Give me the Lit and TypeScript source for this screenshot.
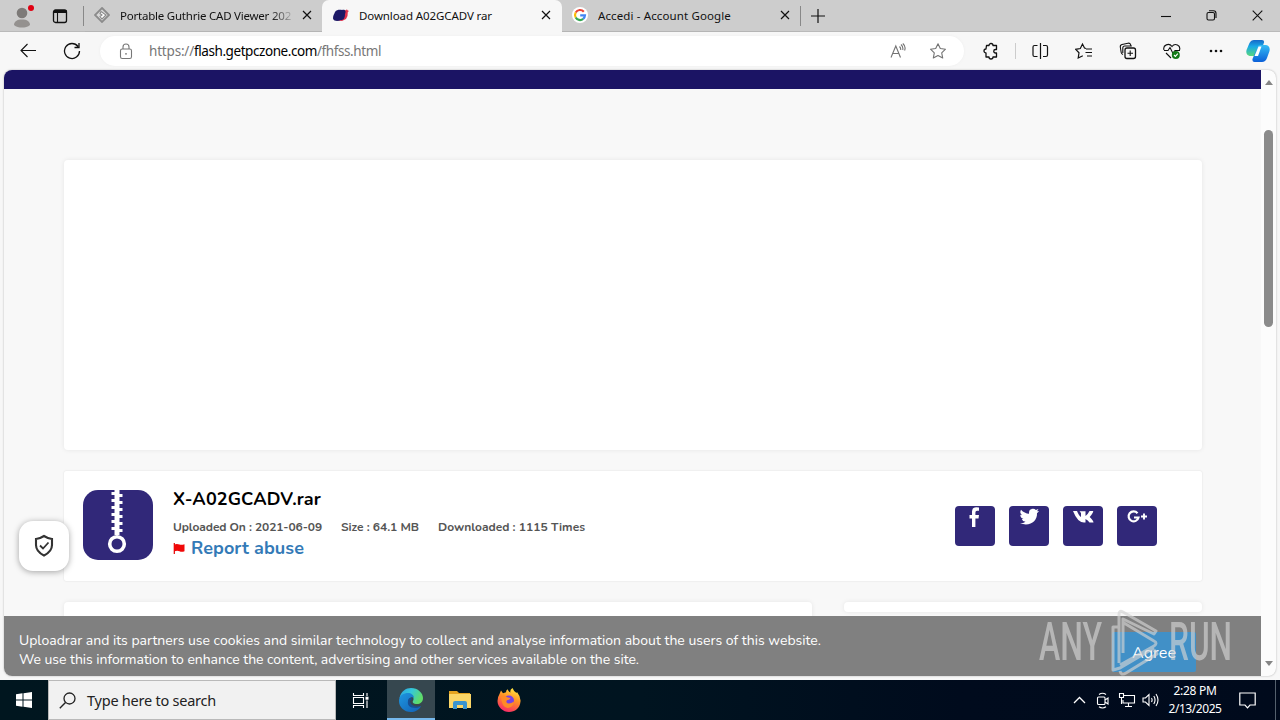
import { LitElement, html, css, svg } from "lit";
import type { TemplateResult } from "lit";
import { customElement, property } from "lit/decorators.js";

/**
 * A single line of text, tracked so that it takes exactly `width` pixels
 * @summary Fixed width text
 */
@customElement("text-run")
export class TextRun extends LitElement {
  @property({ type: Number }) width = 0;
  @property() text = "";

  static styles = css`
    :host {
      display: inline-block;
      white-space: pre;
      flex: none;
    }
  `;

  firstUpdated() {
    const span = this.renderRoot.querySelector("span")!;
    const natural = span.getBoundingClientRect().width;
    span.style.letterSpacing = `${(this.width - natural) / this.text.length}px`;
  }

  render() {
    return html`<span>${this.text}</span>`;
  }
}

const icon = (w: number, h: number, body: TemplateResult | TemplateResult[]) => html`
  <svg width=${w} height=${h} viewBox="0 0 ${w} ${h}" fill="none" stroke="currentColor" stroke-width="1.1">${body}</svg>
`;

const icons = {
  profile: icon(26, 28, svg`
    <circle cx="9" cy="11" r="5.300" fill="#7d7a78" stroke="none"/>
    <path d="M1 23c0-3.500 3-5.500 8-5.500s8 2 8 5.500c-2 2-5 2.500-8 2.500s-6-.5-8-2.500z" fill="#94918f" stroke="none"/>
    <circle cx="18" cy="6" r="3" fill="#e00012" stroke="none"/>`),
  workspace: icon(16, 16, svg`
    <rect x="1.500" y="2" width="13" height="12.500" rx="2" stroke="#111" stroke-width="1.300"/>
    <path d="M2 3.500h12.500" stroke="#111" stroke-width="3"/><path d="M5.500 4v10" stroke="#111"/>`),
  cad: icon(16, 16, svg`
    <path d="M8 1 15 8 8 15 1 8z" fill="#d8d8d8" stroke="#8b8b8b" stroke-width="1.800"/>
    <path d="m7 4.500 5 3.500-4 4-2-2.500 2-1.500-2-1.500z" fill="#fff" stroke="#8b8b8b"/>`),
  rar: icon(17, 16, svg`
    <path d="M10 4l4.500-1 .3-1 .7 1.300L17 4l-1.200 1-.3 4-1.500 3-4 2-4-.5z" fill="#e0304c" stroke="none"/>
    <path d="M3 5C5 2 9 3 10 3c4-1 4 2 3 4 0 5-2 6-4 6-3 1.500-7 1.500-8-1.500 0-3 1-4 2-6.500z" fill="#1c1866" stroke="none"/>`),
  google: icon(16, 16, svg`
    <circle cx="8" cy="8" r="8" fill="#fff" stroke="none"/>
    <g stroke-width="2.200"><path d="M11.800 4.700A5 5 0 0 0 3.700 5.500" stroke="#ea4335"/>
    <path d="M3.700 5.500a5 5 0 0 0 0 5" stroke="#fbbc05"/>
    <path d="M3.700 10.500a5 5 0 0 0 7.500 1.400" stroke="#34a853"/>
    <path d="M11.200 11.900A5 5 0 0 0 13 8.300H8.200" stroke="#4285f4"/></g>`),
  close: icon(10, 10, svg`<path d="m1 1 8 8M9 1 1 9" stroke-width="1.200"/>`),
  plus: icon(14, 14, svg`<path d="M7 0v14M0 7h14" stroke-width="1.200"/>`),
  minimize: icon(10, 10, svg`<path d="M0 5.500h10"/>`),
  restore: icon(11, 11, svg`<rect x="1" y="2.500" width="7.500" height="7.500" rx="1.500"/><path d="M3 .8h4.500Q10 .8 10 3.500V8"/>`),
  winClose: icon(11, 11, svg`<path d="m.7.7 9.600 9.600m0-9.600L.7 10.300"/>`),
  back: icon(18, 18, svg`<path d="M17 8.500H2m6.500-6.500L2 8.500 8.500 15"/>`),
  reload: icon(18, 18, svg`<path d="M15 4.500A7.500 7.500 0 1 0 16.500 9M16 1v4.500h-4.500" stroke-width="1.300"/>`),
  lock: icon(14, 17, svg`
    <rect x="1.500" y="6" width="11" height="9.500" rx="1.800"/><path d="M4 6V4a3 3 0 0 1 6 0v2"/>
    <circle cx="7" cy="10.800" r=".9" fill="currentColor" stroke="none"/>`),
  readAloud: icon(16, 16, svg`
    <path d="M1 14.500 5.800 3l4.700 11.500M2.700 10.500h6.200M9.500 3.500q1.500 1.500 1.200 3.500M11 1.500q2.500 2.500 1.700 5.500M12.800.5q3.400 3 1.800 7"/>`),
  star: icon(18, 18, svg`
    <path d="m9 1.700 2.300 4.800 5.200.7-3.800 3.600 1 5.200L9 13.500l-4.700 2.500 1-5.200L1.500 7.200l5.200-.7z" stroke-linejoin="round"/>`),
  puzzle: icon(18, 18, svg`
    <path d="M4.500 3.500H7a2 2 0 0 1 4 0h3.500v4h-1a1.700 1.700 0 0 0 0 3.500h1v4H11a2 2 0 0 1-4 0H4v-4a2 2 0 0 1 0-4z" stroke-width="1.300" stroke-linejoin="round"/>`),
  split: icon(18, 18, svg`
    <path d="M9.500 1v16M6.500 3.500H3.500q-1.500 0-1.500 1.500v8q0 1.500 1.500 1.500h3M12 3.500h3q1.500 0 1.500 1.500v8q0 1.500-1.500 1.500h-3" stroke-width="1.200"/>`),
  favorites: icon(18, 18, svg`
    <path d="M11 6.500 9.500 6 7.500 2 5.300 6.500l-4.600.8L4 10.800 3.200 16l4.600-2.200M11 7h6M10.500 10.500H17M12 14h5" stroke-width="1.200"/>`),
  collections: icon(18, 18, svg`
    <rect x="6" y="6" width="10.500" height="10.500" rx="2" stroke-width="1.300"/><path d="M11.200 8.500v5.500M8.500 11.200H14"/>
    <path d="M4 12.500q-1.500-.5-1.800-2L1.300 5Q1 3 3 2.500l6-1.300q2-.4 2.600 1.500l.4 1.500M3.800 11V6q0-2 2-2h7"/>`),
  health: icon(18, 18, svg`
    <path d="M1 8C-.5 3 6 .5 9 4.500 12 .5 18 3.500 16.500 8M3 11l5 5M1 8.500h4l2-3 3 6 2-3h5"/>
    <circle cx="12.800" cy="13" r="4" fill="#137a18" stroke="none"/><path d="m11 13 1.400 1.400 2.400-2.700" stroke="#fff"/>`),
  more: icon(16, 4, svg`<g fill="currentColor" stroke="none"><circle cx="3" cy="2" r="1.300"/><circle cx="8" cy="2" r="1.300"/><circle cx="13" cy="2" r="1.300"/></g>`),
  copilot: icon(24, 24, svg`
    <defs>
      <linearGradient id="ca" x1="0" y1="0" x2="0" y2="1"><stop offset="0" stop-color="#1668c8"/><stop offset=".4" stop-color="#19a8e6"/><stop offset="1" stop-color="#58d87e"/></linearGradient>
      <linearGradient id="cb" x1="0" y1="0" x2="0" y2="1"><stop offset="0" stop-color="#34bdf5"/><stop offset="1" stop-color="#0b5fd8"/></linearGradient>
    </defs>
    <g stroke="none"><path d="M8 1h8q2.500 0 2 2.500L14 15q-1 2-3 2H3.500q-4-1-3-6L3.500 4Q5 1 8 1z" fill="url(#ca)"/>
    <path d="M14 6h6q4.500 1 3.500 6l-2.500 7q-1.500 4-5 4H8.500Q6 23 6.500 20L11 9q1-3 3-3z" fill="url(#cb)"/>
    <path d="M12.500 7.500h3L12 17H8.500z" fill="#fff"/></g>`),
  shield: icon(22, 24, svg`
    <path d="M11 2q4 2.500 8 3v6q0 6.500-8 10.500Q3 17.500 3 11V5q4-.5 8-3z" stroke-width="2.100"/>
    <path d="m7 11.500 3 3 5.500-6" stroke-width="1.800"/>`),
  zip: icon(70, 70, svg`
    <rect width="70" height="70" rx="15" fill="#312879" stroke="none"/>
    <path d="M34 0v45" stroke="#fff" stroke-width="5"/>
    <path d="M30.500 2v42M37.500 4v42" stroke="#fff" stroke-width="4" stroke-dasharray="3 4"/>
    <circle cx="34" cy="54" r="7.300" fill="#312879" stroke="#fff" stroke-width="3.600"/>`),
  flag: icon(12, 11, svg`<path d="M1.300 0v11" stroke="#e00000" stroke-width="1.200"/><path d="M1 1.500q3-1 5.500 0 2 .6 5-.3v7q-3 1-5 0-2.500-1-5.500.3z" fill="#f00808" stroke="none"/>`),
  facebook: icon(20, 22, svg`<path d="M14 1.500v3.200h-2q-1.600 0-1.600 1.800V9H14l-.5 3.500h-3.100V21H7v-8.500H4.500V9H7V5.500q0-4 4.300-4.200z" fill="#fff" stroke="none"/>`),
  twitter: icon(20, 22, svg`<path d="M20 5q-1 1.500-2 2.200C18.500 15 11 21 1 17.300q3.500 0 5.500-1.500Q3.500 15.500 2.800 13h1.700Q1.300 12 1.300 8.800l1.800.5Q.2 7 2 3.800 5.500 7.500 10 7.800 9.500 3 14 2.800q1.700 0 2.900 1.200l2.500-.9q-.4 1.400-1.600 2.200z" fill="#fff" stroke="none"/>`),
  vk: icon(22, 22, svg`<path d="M1 5h4q2 5 4 6V7L7.500 5.200h6V10q2-1 4-5h3.700q.3 1.500-3.500 6 3.800 3.500 3.800 5.500h-4q-1.500-2.500-4-3.500v3.500H12Q5.500 16.500 1 5z" fill="#fff" stroke="none"/>`),
  gplus: icon(22, 22, svg`<path d="M11.500 7.200a5 5 0 1 0 1 4.300H8" stroke="#fff" stroke-width="2.200"/><path d="M18 7.500v6M15 10.500h6" stroke="#fff" stroke-width="1.900"/>`),
  start: icon(16, 16, svg`<path d="m0 2.200 6.500-.9v6.200H0zM7.500 1.200 16 0v7.500H7.500zM0 8.500h6.500v6.200L0 13.800zM7.500 8.500H16V16l-8.500-1.200z" fill="#fff" stroke="none"/>`),
  search: icon(17, 17, svg`<circle cx="10.500" cy="6.500" r="5.500" stroke-width="1.300"/><path d="M6.500 10.500.8 16.200" stroke-width="1.400"/>`),
  taskView: icon(17, 17, svg`<path d="M1.500 1v2.500h10V1M1.500 16v-2.500h10V16M1.500 5.500h10v6h-10zM15 1v3M15 8.500V16"/><path d="M13.500 4.700h3v3h-3z" fill="#fff" stroke="none"/>`),
  edge: icon(24, 24, svg`
    <defs>
      <linearGradient id="ea" x1="0" y1="0" x2="1" y2=".4"><stop offset="0" stop-color="#2b9fdf"/><stop offset=".5" stop-color="#34c7dc"/><stop offset="1" stop-color="#5fdc69"/></linearGradient>
      <linearGradient id="eb" x1="0" y1="0" x2="1" y2="1"><stop offset="0" stop-color="#1e96e0"/><stop offset="1" stop-color="#1260b5"/></linearGradient>
    </defs>
    <g stroke="none"><path d="M.5 10C2 3 7 0 12 0c7 0 12 5 12 10 0 4-3 6-6 6-3.500 0-5-1.500-4-3 3-5-6-9-13.500-3z" fill="url(#ea)"/>
    <path d="M0 13c0-6 5-8 9-8 3 0 6 2 6 5-2-2-6 0-5.500 4 .5 4 6.500 7 12.500 4-2 4-6 6-10 6-7 0-12-5-12-11z" fill="url(#eb)"/>
    <path d="M9.500 11q-3 9 7.500 9 3 0 5-2-8 1.500-10.500-3-1.500-3 2-4-2-2-4 0z" fill="#174e94"/></g>`),
  explorer: icon(22, 20, svg`
    <g stroke="none"><path d="M0 1h8l2 2h11v5H0z" fill="#e5a420"/><path d="M0 4h22v14H0z" fill="#fbd667"/>
    <path d="M4 19v-6q0-2 2-2h10q2 0 2 2v6h-4v-4H8v4z" fill="#3994cf"/></g>`),
  firefox: icon(24, 24, svg`
    <defs><linearGradient id="fa" x1=".8" y1="0" x2=".4" y2="1"><stop offset="0" stop-color="#fff044"/><stop offset=".45" stop-color="#ff9325"/><stop offset="1" stop-color="#f92c66"/></linearGradient></defs>
    <g stroke="none"><path d="M2.500 6 4 2.500l2 2.700 3-1q0-2 1.500-3 1 2.500 3 3.300Q12.500 2 15.500 0q1 3 4 5l.5-1q4 5 3.500 9.500C23 20 18 24 12 24S.5 19 .5 13Q.5 9 2.500 6z" fill="url(#fa)"/>
    <circle cx="12" cy="12.500" r="5" fill="#7542e5"/>
    <path d="M4 8.500q4-1.500 5.500.5l4 1q-.5 2-3.500 2.300-1.500 1.700.5 3 3 .7 6.500-1.800-.5 6-6.500 6.500Q4.500 19 4 8.500z" fill="#ff8a27"/></g>`),
  chevron: icon(13, 8, svg`<path d="m1 7 5.500-5.500L12 7" stroke-width="1.300"/>`),
  camera: icon(14, 17, svg`<rect x="1.500" y="5" width="7.500" height="7.500" rx="1"/><path d="m9 8 3-2v6L9 10M3 2.500q3.500-2.500 7 0M3 14.800q3.500 2.500 7 0"/>`),
  network: icon(18, 16, svg`<path d="M6 3.500h10.500v7.500H5V8M10.500 11v3.500M7 14.500h7M1.500 1.500h4v4h-4zM3.500 5.500V12"/>`),
  sound: icon(18, 16, svg`<path d="M1 6h2.500L7 2.500v11L3.500 10H1zM9.500 6q1.200 2 0 4M11.800 4q2.500 4 0 8M14 2q4 6 0 12"/>`),
  notify: icon(17, 17, svg`<path d="M.8 1h15.400v12H11l-2.500 2.800L6 13H.8z" stroke-width="1.200"/>`),
};

const tabs = [
  { name: "first", icon: icons.cad, title: "Portable Guthrie CAD Viewer 202", width: 171 },
  { name: "active", icon: icons.rar, title: "Download A02GCADV rar", width: 133 },
  { name: "last", icon: icons.google, title: "Accedi - Account Google", width: 133 },
];

const shares = [icons.facebook, icons.twitter, icons.vk, icons.gplus];

@customElement("browser-chrome")
export class BrowserChrome extends LitElement {
  static styles = css`
    :host {
      display: block;
      height: 70px;
      color: #111;
      background: #f7f7f7;
      font-family: "Noto Sans", "Open Sans", sans-serif;
    }
    svg { display: block; flex: none; }
    .strip, .tab, .bar, .pill, .tools { display: flex; align-items: center; }
    .strip { height: 32px; background: #cdcdcd; box-sizing: border-box; border-bottom: 1px solid #bababa; }
    .profile { padding-left: 13px; width: 39px; }
    .rule { width: 1px; height: 20px; background: #888; }
    .rule.left { margin-left: 15px; }
    .tab {
      box-sizing: border-box;
      width: 240px;
      height: 32px;
      font-size: 11.500px;
      padding: 0 11px 0 10px;
      gap: 10px;
      border-bottom: 1px solid #b5b5b5;
    }
    .title { flex: 1; min-width: 0; overflow: hidden; }
    .close { display: flex; }
    .first { width: 237px; margin-left: 1px; padding: 0 10px 0 9px; }
    .first .title { mask-image: linear-gradient(90deg, #000 88%, transparent 102%); }
    .active { background: #f7f7f7; border-color: #f7f7f7; border-radius: 7px 7px 0 0; }
    .last { width: 238px; padding-right: 10px; }
    .new { margin-left: 10px; }
    .window { display: flex; align-items: center; gap: 35px; margin-left: auto; padding-right: 17px; }
    .bar { height: 38px; box-sizing: border-box; padding-left: 19px; }
    .bar .reload { margin: 0 19px 0 26px; }
    .pill {
      box-sizing: border-box;
      width: 864px;
      height: 30px;
      border-radius: 15px;
      background: #fff;
      padding: 0 17px 0 19px;
      font-size: 13.500px;
      color: #777;
      box-shadow: 0 0 3px #eee;
    }
    .url { display: flex; flex: 1; margin-left: 16px; }
    .host { color: #000; }
    .pill .actions { display: flex; gap: 23px; align-items: center; color: #737373; }
    .tools { gap: 26.300px; margin-left: 18px; }
    .tools .rule { height: 16px; background: #ccc; margin: 0 -12px 0 -11px; }
    .copilot { margin-left: 22px; }
  `;

  render() {
    return html`
      <div class="strip">
        <div class="profile">${icons.profile}</div>
        ${icons.workspace}
        <div class="rule left"></div>
        ${tabs.map((tab) => html`
          <div class="tab ${tab.name}">
            ${tab.icon}
            <div class="title"><text-run .text=${tab.title} .width=${tab.width}></text-run></div>
            <span class="close">${icons.close}</span>
          </div>
        `)}
        <div class="rule"></div>
        <span class="new">${icons.plus}</span>
        <div class="window">${icons.minimize}${icons.restore}${icons.winClose}</div>
      </div>
      <div class="bar">
        ${icons.back}
        <span class="reload">${icons.reload}</span>
        <div class="pill">
          ${icons.lock}
          <div class="url">
            <text-run text="https://" width="45"></text-run>
            <text-run class="host" text="flash.getpczone.com" width="123"></text-run>
            <text-run text="/fhfss.html" width="64"></text-run>
          </div>
          <div class="actions">${icons.readAloud}${icons.star}</div>
        </div>
        <div class="tools">
          ${icons.puzzle}
          <div class="rule"></div>
          ${icons.split}${icons.favorites}${icons.collections}${icons.health}${icons.more}
        </div>
        <span class="copilot">${icons.copilot}</span>
      </div>
    `;
  }
}

@customElement("download-page")
export class DownloadPage extends LitElement {
  static styles = css`
    :host {
      display: flex;
      position: relative;
      box-sizing: border-box;
      height: 606px;
      margin: 0 4px 4px;
      border-radius: 8px;
      overflow: hidden;
      background: #fcfcfc;
      box-shadow: 0 0 2px #aaa;
      font-family: "Nunito", "Open Sans", sans-serif;
    }
    svg { display: block; }
    .page { width: 1257px; background: #f8f8f8; }
    .top { height: 19px; background: #1b1464; }
    .content { display: grid; gap: 21px; padding: 71px 59px 0 60px; }
    .card {
      background: #fff;
      box-sizing: border-box;
      border-radius: 4px;
      box-shadow: 0 0 5px rgba(0, 0, 0, 0.08);
    }
    .ad { height: 290px; }
    .file { display: flex; height: 110px; padding: 19px 45px 0 19px; border-radius: 2px; box-shadow: 0 0 2px rgba(0, 0, 0, 0.13); }
    .info { flex: 1; margin-left: 20px; }
    .name { display: block; font-size: 18px; font-weight: 700; line-height: 18px; height: 20px; color: #000; }
    .meta { display: flex; gap: 19px; height: 18px; margin-top: 8px; font-size: 12px; font-weight: 700; line-height: 18px; color: #555; }
    .abuse { display: flex; align-items: center; gap: 6px; height: 24px; font-size: 18px; font-weight: 700; color: #337ab7; }
    .share { display: flex; gap: 14px; padding-top: 16px; }
    .share span { display: flex; justify-content: center; width: 40px; height: 40px; background: #312879; border-radius: 4px; }
    .columns { display: grid; grid-template-columns: 748px 358px; gap: 32px; align-items: start; }
    .main { height: 80px; }
    .side { height: 10px; }
    .scroll { display: flex; flex-direction: column; align-items: center; width: 15px; }
    .up, .down { border: 4.500px solid transparent; }
    .up { border-bottom: 5px solid #858585; border-top: 0; margin: 10px 0 45px; }
    .down { border-top: 5px solid #858585; border-bottom: 0; margin: auto 0 10px; }
    .thumb { width: 9px; height: 197px; border-radius: 5px; background: #8b8b8b; }
    .privacy {
      position: absolute;
      left: 15px;
      top: 451px;
      display: flex;
      align-items: center;
      justify-content: center;
      width: 50px;
      height: 50px;
      border-radius: 14px;
      background: #fff;
      color: #333;
      box-shadow: 0 1px 6px rgba(0, 0, 0, 0.35);
    }
    .cookies {
      position: absolute;
      left: 0;
      bottom: 0;
      display: flex;
      justify-content: space-between;
      box-sizing: border-box;
      width: 1257px;
      height: 60px;
      padding: 15px 65px 0 15px;
      background: #808080;
      color: #fff;
      font-size: 14px;
      line-height: 19px;
    }
    .cookies text-run { display: block; }
    .agree {
      box-sizing: border-box;
      width: 84px;
      height: 40px;
      margin-top: 1px;
      padding: 0 20px;
      background: #4190c7;
      border-radius: 2px;
      font-size: 16px;
      line-height: 43px;
    }
  `;

  render() {
    return html`
      <div class="page">
        <div class="top"></div>
        <div class="content">
          <div class="card ad"></div>
          <div class="card file">
            ${icons.zip}
            <div class="info">
              <text-run class="name" text="X-A02GCADV.rar" width="148"></text-run>
              <div class="meta">
                <text-run text="Uploaded On : 2021-06-09" width="149"></text-run>
                <text-run text="Size : 64.1 MB" width="78"></text-run>
                <text-run text="Downloaded : 1115 Times" width="147"></text-run>
              </div>
              <div class="abuse">${icons.flag}<text-run text="Report abuse" width="113"></text-run></div>
            </div>
            <div class="share">${shares.map((s) => html`<span>${s}</span>`)}</div>
          </div>
          <div class="columns">
            <div class="card main"></div>
            <div class="card side"></div>
          </div>
        </div>
      </div>
      <div class="scroll">
        <i class="up"></i>
        <div class="thumb"></div>
        <i class="down"></i>
      </div>
      <div class="privacy">${icons.shield}</div>
      <div class="cookies">
        <div>
          <text-run
            text="Uploadrar and its partners use cookies and similar technology to collect and analyse information about the users of this website."
            width="802"
          ></text-run>
          <text-run
            text="We use this information to enhance the content, advertising and other services available on the site."
            width="620"
          ></text-run>
        </div>
        <div class="agree"><text-run text="Agree" width="44"></text-run></div>
      </div>
    `;
  }
}

@customElement("task-bar")
export class TaskBar extends LitElement {
  static styles = css`
    :host {
      display: flex;
      height: 40px;
      background: linear-gradient(90deg, #00161f, #001420 50%, #000b1d 75%, #000a1c);
      color: #fff;
      font-family: "Noto Sans", "Open Sans", sans-serif;
    }
    svg { display: block; flex: none; }
    .cell { display: flex; align-items: center; justify-content: center; width: 48px; height: 40px; box-sizing: border-box; }
    .search {
      display: flex;
      align-items: center;
      gap: 11px;
      box-sizing: border-box;
      width: 288px;
      padding-left: 10px;
      border: 1px solid #b9b9b9;
      background: #f1f1f1;
      color: #222;
      font-size: 14.500px;
    }
    .active { margin-left: 3px; background: #36474f; border-bottom: 2px solid #76b9ed; padding-top: 2px; }
    .pinned { margin-left: 1px; }
    .tray { display: flex; align-items: center; margin-left: auto; }
    .tray svg { margin-right: 6px; }
    .tray .camera { margin: 0 2px 0 4px; }
    .tray .camera svg { margin-right: 6px; }
    .clock { display: grid; justify-items: center; width: 62px; font-size: 12px; line-height: 18px; margin: 0 13px 0 -2px; }
    .show { width: 4px; height: 40px; margin-left: 13px; border-left: 1px solid #54606d; }
  `;

  render() {
    return html`
      <div class="cell">${icons.start}</div>
      <div class="search">${icons.search}<text-run text="Type here to search" width="129"></text-run></div>
      <div class="cell">${icons.taskView}</div>
      <div class="cell active">${icons.edge}</div>
      <div class="cell pinned">${icons.explorer}</div>
      <div class="cell pinned">${icons.firefox}</div>
      <div class="tray">
        ${icons.chevron}<span class="camera">${icons.camera}</span>${icons.network}${icons.sound}
        <div class="clock">
          <text-run text="2:28 PM" width="43"></text-run>
          <text-run text="2/13/2025" width="53"></text-run>
        </div>
        ${icons.notify}
        <div class="show"></div>
      </div>
    `;
  }
}

@customElement("app-root")
export class AppRoot extends LitElement {
  static styles = css`
    :host {
      display: flex;
      flex-direction: column;
      position: relative;
      width: 1280px;
      height: 720px;
      overflow: hidden;
      background: #f7f7f7;
    }
    .watermark {
      position: absolute;
      left: 1036px;
      top: 606px;
      opacity: 0.65;
      font-family: Roboto, sans-serif;
      font-weight: 500;
    }
  `;

  render() {
    return html`
      <browser-chrome></browser-chrome>
      <download-page></download-page>
      <task-bar></task-bar>
      <svg class="watermark" width="220" height="70" viewBox="0 0 220 70" fill="#d4d4d4">
        <text x="3" y="54" font-size="53" textLength="63" lengthAdjust="spacingAndGlyphs">ANY</text>
        <text x="133" y="54" font-size="53" textLength="63" lengthAdjust="spacingAndGlyphs">RUN</text>
        <path
          d="M82 21h-5v43l7-2 34-20M83 57V8q0-4 4-2l33 19-2 3-31-15v34M84 59l34-19q4-3 0-5L88 17M84 65q1 5 6 2l31-19-3-4"
          fill="none" stroke="#d4d4d4" stroke-width="3" stroke-linejoin="round"
        />
      </svg>
    `;
  }
}
